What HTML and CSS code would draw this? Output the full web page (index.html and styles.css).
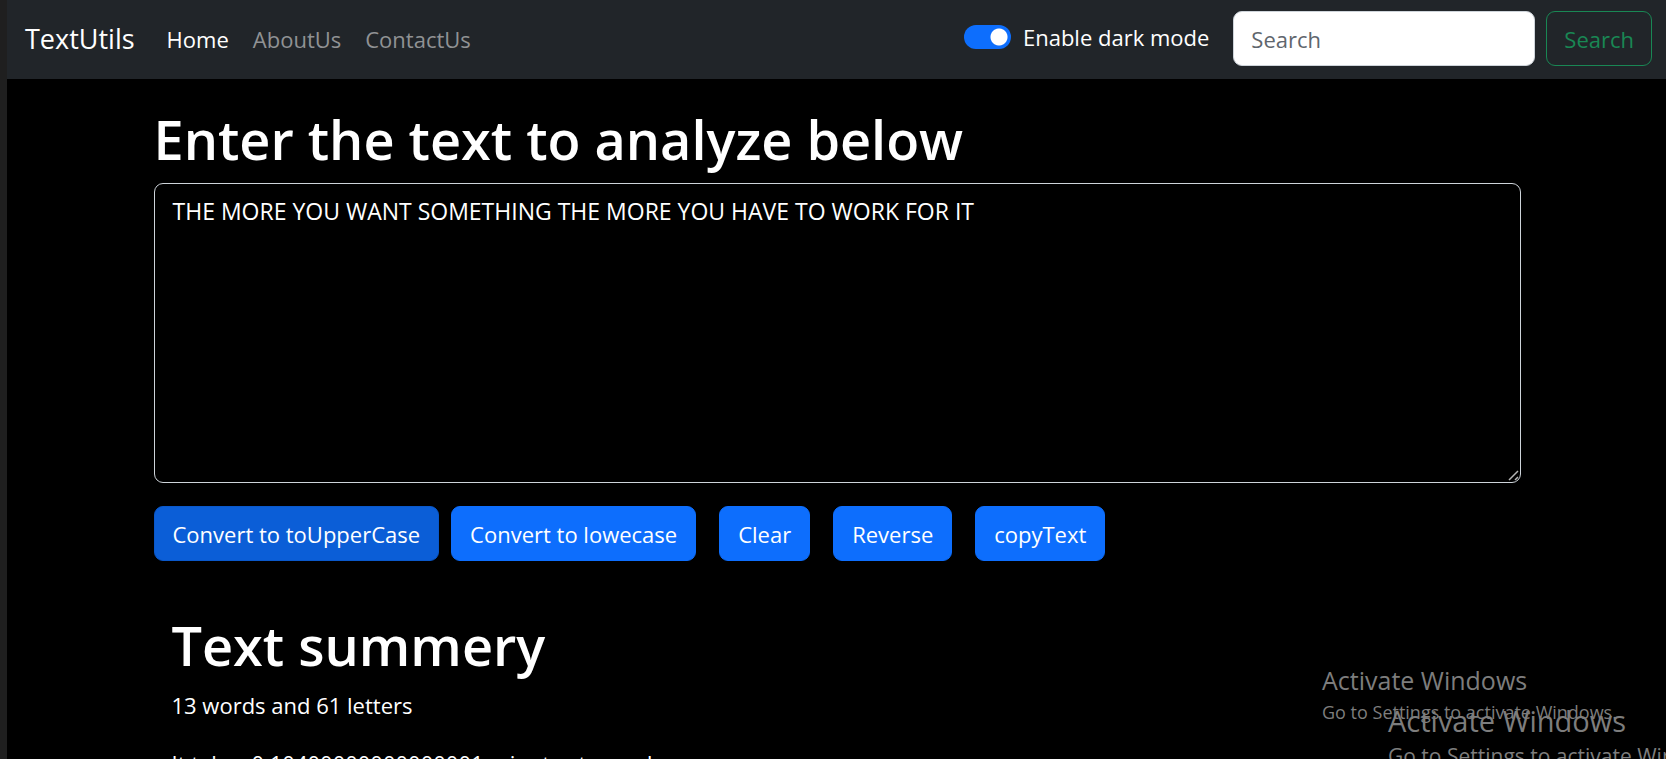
FILE: index.html
```html
<!DOCTYPE html>
<html lang="en">
<head>
<meta charset="utf-8">
<title>TextUtils</title>
<link rel="stylesheet" href="styles.css">
</head>
<body>
<nav class="navbar">
  <a class="brand" href="#">TextUtils</a>
  <ul class="nav-links">
    <li><a class="nav-link active" href="#">Home</a></li>
    <li><a class="nav-link" href="#about">AboutUs</a></li>
    <li><a class="nav-link" href="#contact">ContactUs</a></li>
  </ul>
  <div class="switch">
    <input class="switch-input" type="checkbox" role="switch" id="dark-mode" checked>
    <label for="dark-mode">Enable dark mode</label>
  </div>
  <form class="search" role="search">
    <input class="search-input" type="search" placeholder="Search" aria-label="Search">
    <button class="btn btn-outline" type="submit">Search</button>
  </form>
</nav>
<main class="container">
  <h1><label for="text">Enter the text to analyze below</label></h1>
  <div class="editor">
    <textarea class="text-area" id="text" rows="8" spellcheck="false">THE MORE YOU WANT SOMETHING THE MORE YOU HAVE TO WORK FOR IT</textarea>
    <svg class="grip" viewBox="0 0 12 12" aria-hidden="true"><path d="M1 10L10 1M7 10L10 7"/></svg>
  </div>
  <div class="actions">
    <div class="convert">
      <button class="btn btn-primary pressed" type="button">Convert to toUpperCase</button>
      <button class="btn btn-primary" type="button">Convert to lowecase</button>
    </div>
    <button class="btn btn-primary" type="button">Clear</button>
    <button class="btn btn-primary" type="button">Reverse</button>
    <button class="btn btn-primary" type="button">copyText</button>
  </div>
  <section class="summary">
    <h2>Text summery</h2>
    <p>13 words and 61 letters</p>
    <p>It takes 0.10400000000000001 minutes to read</p>
  </section>
</main>
<aside class="watermark watermark-small">
  <p class="watermark-title">Activate Windows</p>
  <p>Go to Settings to activate Windows.</p>
</aside>
<aside class="watermark watermark-large">
  <p class="watermark-title">Activate Windows</p>
  <p>Go to Settings to activate Windows.</p>
</aside>
</body>
</html>
```
FILE: styles.css
```css
* { box-sizing: border-box; }
body {
  margin: 0;
  height: 100vh;
  overflow: hidden;
  position: relative;
  border-left: 7px solid #1f1f1f;
  background: #000;
  color: #fff;
  font: 22px/36px "Segoe UI", "Open Sans", "Noto Sans", sans-serif;
}
h1, h2, p, ul { margin: 0; }
.navbar {
  display: flex;
  align-items: center;
  padding: 11px 14px 13px 18px;
  background: #212529;
}
.brand { margin-right: 20px; color: #fff; font-size: 27px; text-decoration: none; }
.nav-links { display: flex; padding: 0; list-style: none; }
.nav-link { display: block; padding: 0 12px; color: #909294; text-decoration: none; }
.nav-link.active { color: #fff; }
.switch { display: flex; align-items: center; gap: 12px; margin: 0 24px 4px auto; }
.switch-input {
  appearance: none;
  width: 47px;
  height: 24px;
  margin: 0;
  border-radius: 12px;
  background: radial-gradient(circle at 35px 12px, #fff 8px, #0d6efd 9px);
}
.search { display: flex; gap: 11px; }
.search-input {
  width: 302px;
  padding: 0 17px;
  border: 1px solid #ced4da;
  border-radius: 9px;
  background: #fff;
  color: #212529;
  font: inherit;
}
.search-input::placeholder { color: #5f666d; opacity: 1; }
.btn {
  padding: 9px 18px 8px;
  border: 1px solid #0d6efd;
  border-radius: 9px;
  color: #fff;
  font: inherit;
}
.btn-primary { background: #0d6efd; }
.btn-primary.pressed { border-color: #0a58ca; background: #0b5ed7; }
.btn-outline { padding-inline: 17px; border-color: #198754; background: transparent; color: #198754; }
.container { max-width: 1368px; margin: 28px auto 0; padding-left: 1px; }
h1, h2 { margin-bottom: 12px; font-size: 54px; font-weight: 600; line-height: 64px; }
.editor { position: relative; }
.text-area {
  display: block;
  width: 100%;
  height: 300px;
  padding: 9px 18px;
  border: 1px solid #ced4da;
  border-radius: 9px;
  background: #000;
  color: #fff;
  font: inherit;
  font-size: 23px;
  resize: none;
}
.grip {
  position: absolute;
  right: 1px;
  bottom: 1px;
  width: 12px;
  height: 12px;
  fill: none;
  stroke: #b5b5b5;
  stroke-width: 1.5;
}
.actions { display: flex; gap: 23px; margin-top: 23px; }
.convert { display: flex; gap: 12px; }
.summary { padding: 52px 18px 0; }
.summary h2 { margin-bottom: 10px; }
.summary p { margin-bottom: 22px; }
.watermark { position: absolute; color: #7d7d7d; white-space: nowrap; }
.watermark-small { left: 1315px; top: 662px; font-size: 18px; line-height: 28px; }
.watermark-small .watermark-title { font-size: 25px; line-height: 36px; }
.watermark-large { left: 1381px; top: 702px; font-size: 21px; line-height: 32px; }
.watermark-large .watermark-title { font-size: 29px; line-height: 38px; }
```
